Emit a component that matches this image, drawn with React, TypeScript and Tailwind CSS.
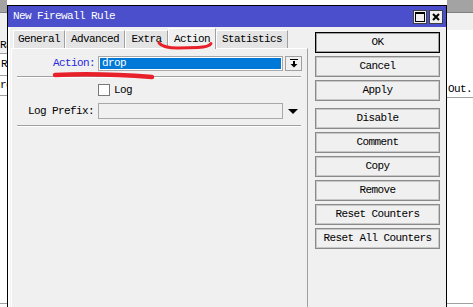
import React from "react";

function Btn({ label, primary = false, extra = "" }: { label: string; primary?: boolean; extra?: string }) {
  return (
    <div
      className={`h-[21px] flex items-center justify-center bg-[#f0f0f0] text-black border ${
        primary
          ? "border-black shadow-[inset_0_0_0_1px_#a0a0a0]"
          : "border-[#8a8a8a] shadow-[inset_0_0_0_1px_#c8c8c8]"
      } ${extra}`}
    >
      {label}
    </div>
  );
}

function Tab({ label, w, active = false }: { label: string; w: string; active?: boolean }) {
  return (
    <div
      className={`${w} flex items-center justify-center text-black ${
        active
          ? "h-[21px] -mb-px relative z-10 bg-[#f0f0f0] border-t border-l border-white border-r border-r-[#a0a0a0]"
          : "h-[18px] bg-[#e4e4e4] border-t border-l border-white border-r border-r-[#a0a0a0]"
      }`}
    >
      {label}
    </div>
  );
}

export default function App() {
  return (
    <div className="w-[473px] h-[307px] relative overflow-hidden bg-white flex font-['Liberation_Mono','Courier_New',monospace] text-[11px] tracking-[-0.6px] leading-none">
      {/* left background strip */}
      <div className="w-[7px] h-full flex flex-col shrink-0">
        <div className="h-[12px] bg-[#a3a3a3]" />
        <div className="h-[26px] bg-[#f0f0f0] border-t border-[#808080]" />
        <div className="h-[16px] bg-[#f0f0f0] border-b border-[#a0a0a0] flex items-center overflow-hidden text-black">Ra</div>
        <div className="h-[22px] bg-white border-b border-[#a0a0a0] flex items-center overflow-hidden pl-[1px] text-black">R</div>
        <div className="h-[20px] bg-white border-b border-[#a0a0a0] flex items-center overflow-hidden text-black">re</div>
        <div className="flex-1 bg-white" />
        <div className="h-[1px] bg-[#a0a0a0] mb-[3px]" />
      </div>

      {/* dialog */}
      <div className="w-[440px] h-[302px] mt-[5px] shrink-0 flex flex-col border-l border-t border-r border-black bg-[#f0f0f0]">
        <div className="h-[21px] bg-[#4b4fcb] flex items-center pl-[5px] pr-[3px] text-white">
          <span className="flex-1">New Firewall Rule</span>
          <div className="flex gap-[2px]">
            <div className="w-[14px] h-[14px] bg-[#f0f0f0] border border-[#404040] flex items-center justify-center">
              <svg width="10" height="10" viewBox="0 0 10 10">
                <rect x="0.5" y="0.5" width="9" height="9" fill="none" stroke="#000" />
                <rect x="0" y="0" width="10" height="2" fill="#000" />
              </svg>
            </div>
            <div className="w-[14px] h-[14px] bg-[#f0f0f0] border border-[#404040] flex items-center justify-center">
              <svg width="8" height="8" viewBox="0 0 8 8">
                <path d="M1 1L7 7M7 1L1 7" stroke="#000" strokeWidth="2" />
              </svg>
            </div>
          </div>
        </div>

        <div className="flex-1 flex border-l-2 border-white pl-[1px]">
          {/* left column */}
          <div className="w-[297px] flex flex-col pt-[1px]">
            <div className="h-[20px] flex items-end pl-[2px]">
              <Tab label="General" w="w-[52px]" />
              <Tab label="Advanced" w="w-[60px]" />
              <Tab label="Extra" w="w-[43px]" />
              <Tab label="Action" w="w-[48px]" active />
              <Tab label="Statistics" w="w-[72px]" />
            </div>
            <div className="flex-1 bg-[#f0f0f0] border-t border-l border-white border-r border-r-[#a0a0a0] flex flex-col">
              {/* Action row */}
              <div className="mt-[7px] h-[15px] flex items-center">
                <div className="w-[83px] text-right text-[#2828e0]">Action:</div>
                <div className="ml-[3px] w-[185px] h-[15px] border border-[#a8a8a8] bg-white p-[1px]">
                  <div className="h-full bg-[#0078d7] text-white flex items-center pl-[2px]">drop</div>
                </div>
                <div className="ml-[2px] w-[17px] h-[15px] border border-[#a0a0a0] bg-[#f0f0f0] flex items-center justify-center">
                  <svg width="8" height="9" viewBox="0 0 8 9">
                    <rect x="0" y="0" width="8" height="1" fill="#000" />
                    <rect x="3" y="2" width="2" height="3" fill="#000" />
                    <path d="M0.5 5H7.5L4 8.5Z" fill="#000" />
                  </svg>
                </div>
              </div>
              <div className="mt-[5px] ml-[5px] w-[284px] h-[1px] bg-[#a0a0a0]" />
              <div className="ml-[5px] w-[284px] h-[1px] bg-white" />
              {/* Log checkbox */}
              <div className="mt-[6px] h-[12px] flex items-center">
                <div className="ml-[86px] w-[12px] h-[12px] bg-white border border-[#7a7a7a]" />
                <span className="ml-[4px] text-black">Log</span>
              </div>
              {/* Log Prefix */}
              <div className="mt-[7px] h-[16px] flex items-center">
                <div className="w-[82px] text-right text-black">Log Prefix:</div>
                <div className="ml-[4px] w-[185px] h-[16px] border border-[#a8a8a8] bg-[#f0f0f0]" />
                <svg className="ml-[5px]" width="10" height="5" viewBox="0 0 10 5">
                  <path d="M0 0H10L5 5Z" fill="#000" />
                </svg>
              </div>
              <div className="mt-[6px] ml-[5px] w-[284px] h-[1px] bg-[#a0a0a0]" />
              <div className="ml-[5px] w-[284px] h-[1px] bg-white" />
            </div>
          </div>

          {/* buttons column */}
          <div className="ml-[7px] w-[125px] pt-[5px] flex flex-col gap-[3px]">
            <Btn label="OK" primary />
            <Btn label="Cancel" />
            <Btn label="Apply" />
            <Btn label="Disable" extra="mt-[4px]" />
            <Btn label="Comment" />
            <Btn label="Copy" />
            <Btn label="Remove" />
            <Btn label="Reset Counters" />
            <Btn label="Reset All Counters" />
          </div>
        </div>
      </div>

      {/* right background strip */}
      <div className="flex-1 h-full flex flex-col">
        <div className="h-[12px] bg-[#a3a3a3]" />
        <div className="h-[18px] bg-[#f0f0f0] border-t border-[#808080]" />
        <div className="h-[52px] bg-white" />
        <div className="h-[16px] bg-white border-b border-[#a0a0a0] flex items-center pl-[1px] overflow-hidden whitespace-nowrap text-black">Out..</div>
        <div className="flex-1 bg-white" />
        <div className="h-[1px] bg-[#a0a0a0] mb-[3px]" />
      </div>

      {/* red annotations */}
      <svg className="absolute inset-0 z-20 pointer-events-none" width="473" height="307" viewBox="0 0 473 307">
        <path d="M159 43 Q163 48 178 48 L198 47.5 Q209 47 211 43.5" fill="none" stroke="#e8202a" strokeWidth="3" strokeLinecap="round" />
        <path d="M55 75 Q100 73 152 77" fill="none" stroke="#e8202a" strokeWidth="4.5" strokeLinecap="round" />
      </svg>
    </div>
  );
}
